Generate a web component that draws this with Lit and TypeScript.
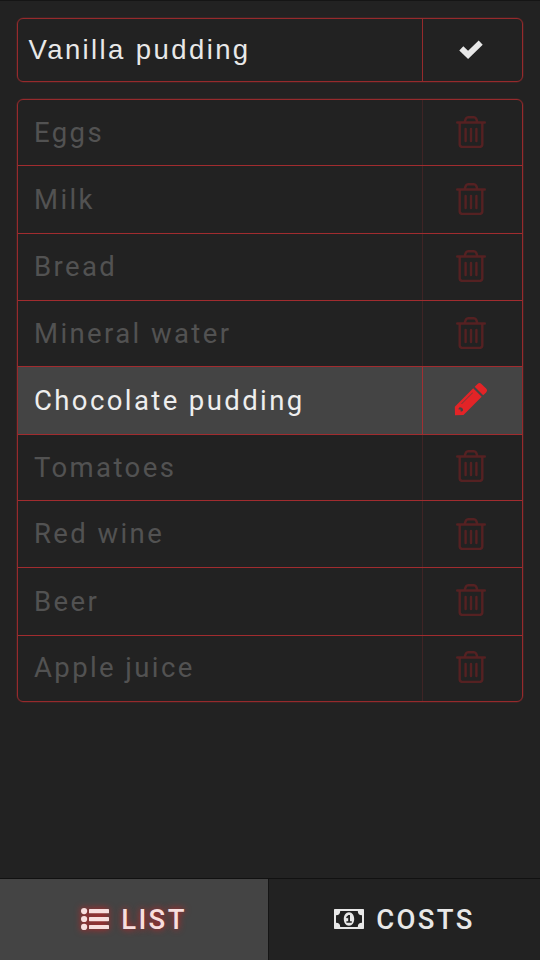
import { LitElement, html, css, svg } from "lit";
import { customElement, state } from "lit/decorators.js";

const trash = html`<svg class="trash" viewBox="0 0 30 32" width="30" height="32">
  <path d="M1.200 6.500H28.800M8.600 6.200L9.700 3Q10.300 1.300 12 1.300H18Q19.700 1.300 20.300 3L21.400 6.200M3.700 6.500V28.300Q3.700 30.900 6.300 30.900H23.700Q26.300 30.900 26.300 28.300V6.500M9.600 13V25M15 13V25M20.400 13V25" />
</svg>`;

const pencil = html`<svg class="pencil" viewBox="0 0 34 34" width="34" height="34">
  <path fill-rule="evenodd" d="M1 33.300L.8 24.700L19.200 6.300L27.700 14.800L9.500 33ZM5.600 25.300L4.600 26.400V27.400H6.600V29.400H7.900L9 28.500Q9.400 25.600 5.600 25.300ZM18.300 10.700L7.500 21.400Q7.100 22.300 7.800 21.900L18.800 11Q19.100 10.300 18.300 10.700Z" />
  <path d="M20.700 4.800L23.600 1.900Q25.500 0 27.400 1.900L32.100 6.600Q34 8.500 32.100 10.400L29.200 13.300Z" />
</svg>`;

const check = html`<svg class="check" viewBox="0 0 24 19" width="24" height="19">
  <path d="M2.300 8.300L9.100 14.900L21.700 2.700" />
</svg>`;

const listIcon = html`<svg class="tab-icon" viewBox="0 0 28 22" width="28" height="22">
  ${[3.1, 11, 18.9].map((y) => svg`<circle cx="3.1" cy=${y} r="3.1" /><rect x="8" y=${y - 2} width="20" height="4.2" rx="0.6" />`)}
</svg>`;

const moneyIcon = html`<svg class="tab-icon" viewBox="0 0 30 20" width="30" height="20">
  <path fill-rule="evenodd" d="M.7 0H29.3Q30 0 30 .7V19.3Q30 20 29.3 20H.7Q0 20 0 19.3V.7Q0 0 .7 0ZM6.2 2Q6.2 6.2 2 6.2V13.8Q6.2 13.8 6.2 18H23.8Q23.8 13.8 28 13.8V6.2Q23.8 6.2 23.8 2Z" />
  <path fill-rule="evenodd" d="M15 3.300C18.200 3.300 20.200 6.500 20.200 10S18.200 16.700 15 16.700S9.800 13.500 9.800 10S11.800 3.300 15 3.300ZM14.400 6L12 8.300L13.100 9.500L14.200 8.600V12.200H12.400V13.800H17.800V12.200H16V6Z" />
</svg>`;

@customElement("app-root")
export class AppRoot extends LitElement {
  @state() private items = ["Eggs", "Milk", "Bread", "Mineral water", "Chocolate pudding", "Tomatoes", "Red wine", "Beer", "Apple juice"];
  @state() private editing = 4;

  static styles = css`
    :host {
      display: flex;
      flex-direction: column;
      box-sizing: border-box;
      height: 960px;
      background: #222;
      border-top: 1px solid #151515;
      color: #e8e8e8;
      font-family: Roboto, sans-serif;
      font-size: 27.5px;
      letter-spacing: 2.4px;
      overflow: hidden;
    }
    svg { display: block; flex: none; fill: currentColor; }
    .entry, .list {
      box-sizing: border-box;
      margin: 0 17px;
      border: 1px solid #962a2c;
      border-radius: 6px;
      box-shadow: 0 0 0 0.5px #962a2c66;
      overflow: hidden;
    }
    .entry {
      display: flex;
      height: 64px;
      margin-top: 17px;
      font-family: "Liberation Sans", sans-serif;
    }
    .entry .name { padding: 0 0 0 10.5px; }
    .entry .action { padding-bottom: 2px; }
    .list {
      display: grid;
      grid-template-rows: 65px 68px 67px 66px 68px 66px 67px 68px 66px;
      height: 603px;
      margin-top: 17px;
    }
    .row { display: flex; box-sizing: border-box; }
    .row + .row { border-top: 1px solid #a12c2f; }
    .name {
      flex: 1;
      display: flex;
      align-items: center;
      white-space: pre;
    }
    .row .name { color: #525252; padding: 0 0 1px 16px; }
    .row:first-child .name { padding-bottom: 0; }
    .row:last-child .name { padding-bottom: 3px; }
    .action {
      box-sizing: border-box;
      width: 100px;
      display: flex;
      align-items: center;
      justify-content: center;
      border-left: 1px solid #962a2c;
      padding-right: 3px;
    }
    .row .action {
      padding-bottom: 1px;
      border-left-color: #3f2425;
      color: #552122;
    }
    .row:nth-child(3n) .action, .row:nth-child(8) .action { padding-bottom: 3px; }
    .row.active { background: #444; }
    .row.active .name { color: #eee; }
    .row.active .action {
      padding: 0 4px 3px 0;
      border-left-color: #a03033;
      color: #e32427;
    }
    .trash {
      fill: none;
      stroke: currentColor;
      stroke-width: 2.4;
      stroke-linecap: round;
    }
    .check {
      fill: none;
      stroke: currentColor;
      stroke-width: 5.8;
    }
    .tabs {
      display: flex;
      height: 82px;
      margin-top: auto;
      box-sizing: border-box;
      border-top: 1px solid #111;
      font-weight: 500;
    }
    .tab {
      flex: 1;
      display: flex;
      align-items: center;
      justify-content: center;
      gap: 12px;
      padding-bottom: 2px;
    }
    .tab span { padding-top: 2px; }
    .tab.on {
      flex: 0 0 268px;
      background: #444;
      border-right: 1px solid #151515;
      color: #f7dede;
      text-shadow: 0 0 7px #d32023;
    }
    .tab.on .tab-icon { filter: drop-shadow(0 0 3.5px #d32023); }
  `;

  render() {
    return html`
      <div class="entry">
        <div class="name">Vanilla pudding</div>
        <div class="action">${check}</div>
      </div>
      <div class="list">
        ${this.items.map((item, i) => html`
          <div class="row ${i === this.editing ? "active" : ""}">
            <div class="name">${item}</div>
            <div class="action">${i === this.editing ? pencil : trash}</div>
          </div>`)}
      </div>
      <div class="tabs">
        <div class="tab on">${listIcon}<span>LIST</span></div>
        <div class="tab">${moneyIcon}<span>COSTS</span></div>
      </div>
    `;
  }
}
